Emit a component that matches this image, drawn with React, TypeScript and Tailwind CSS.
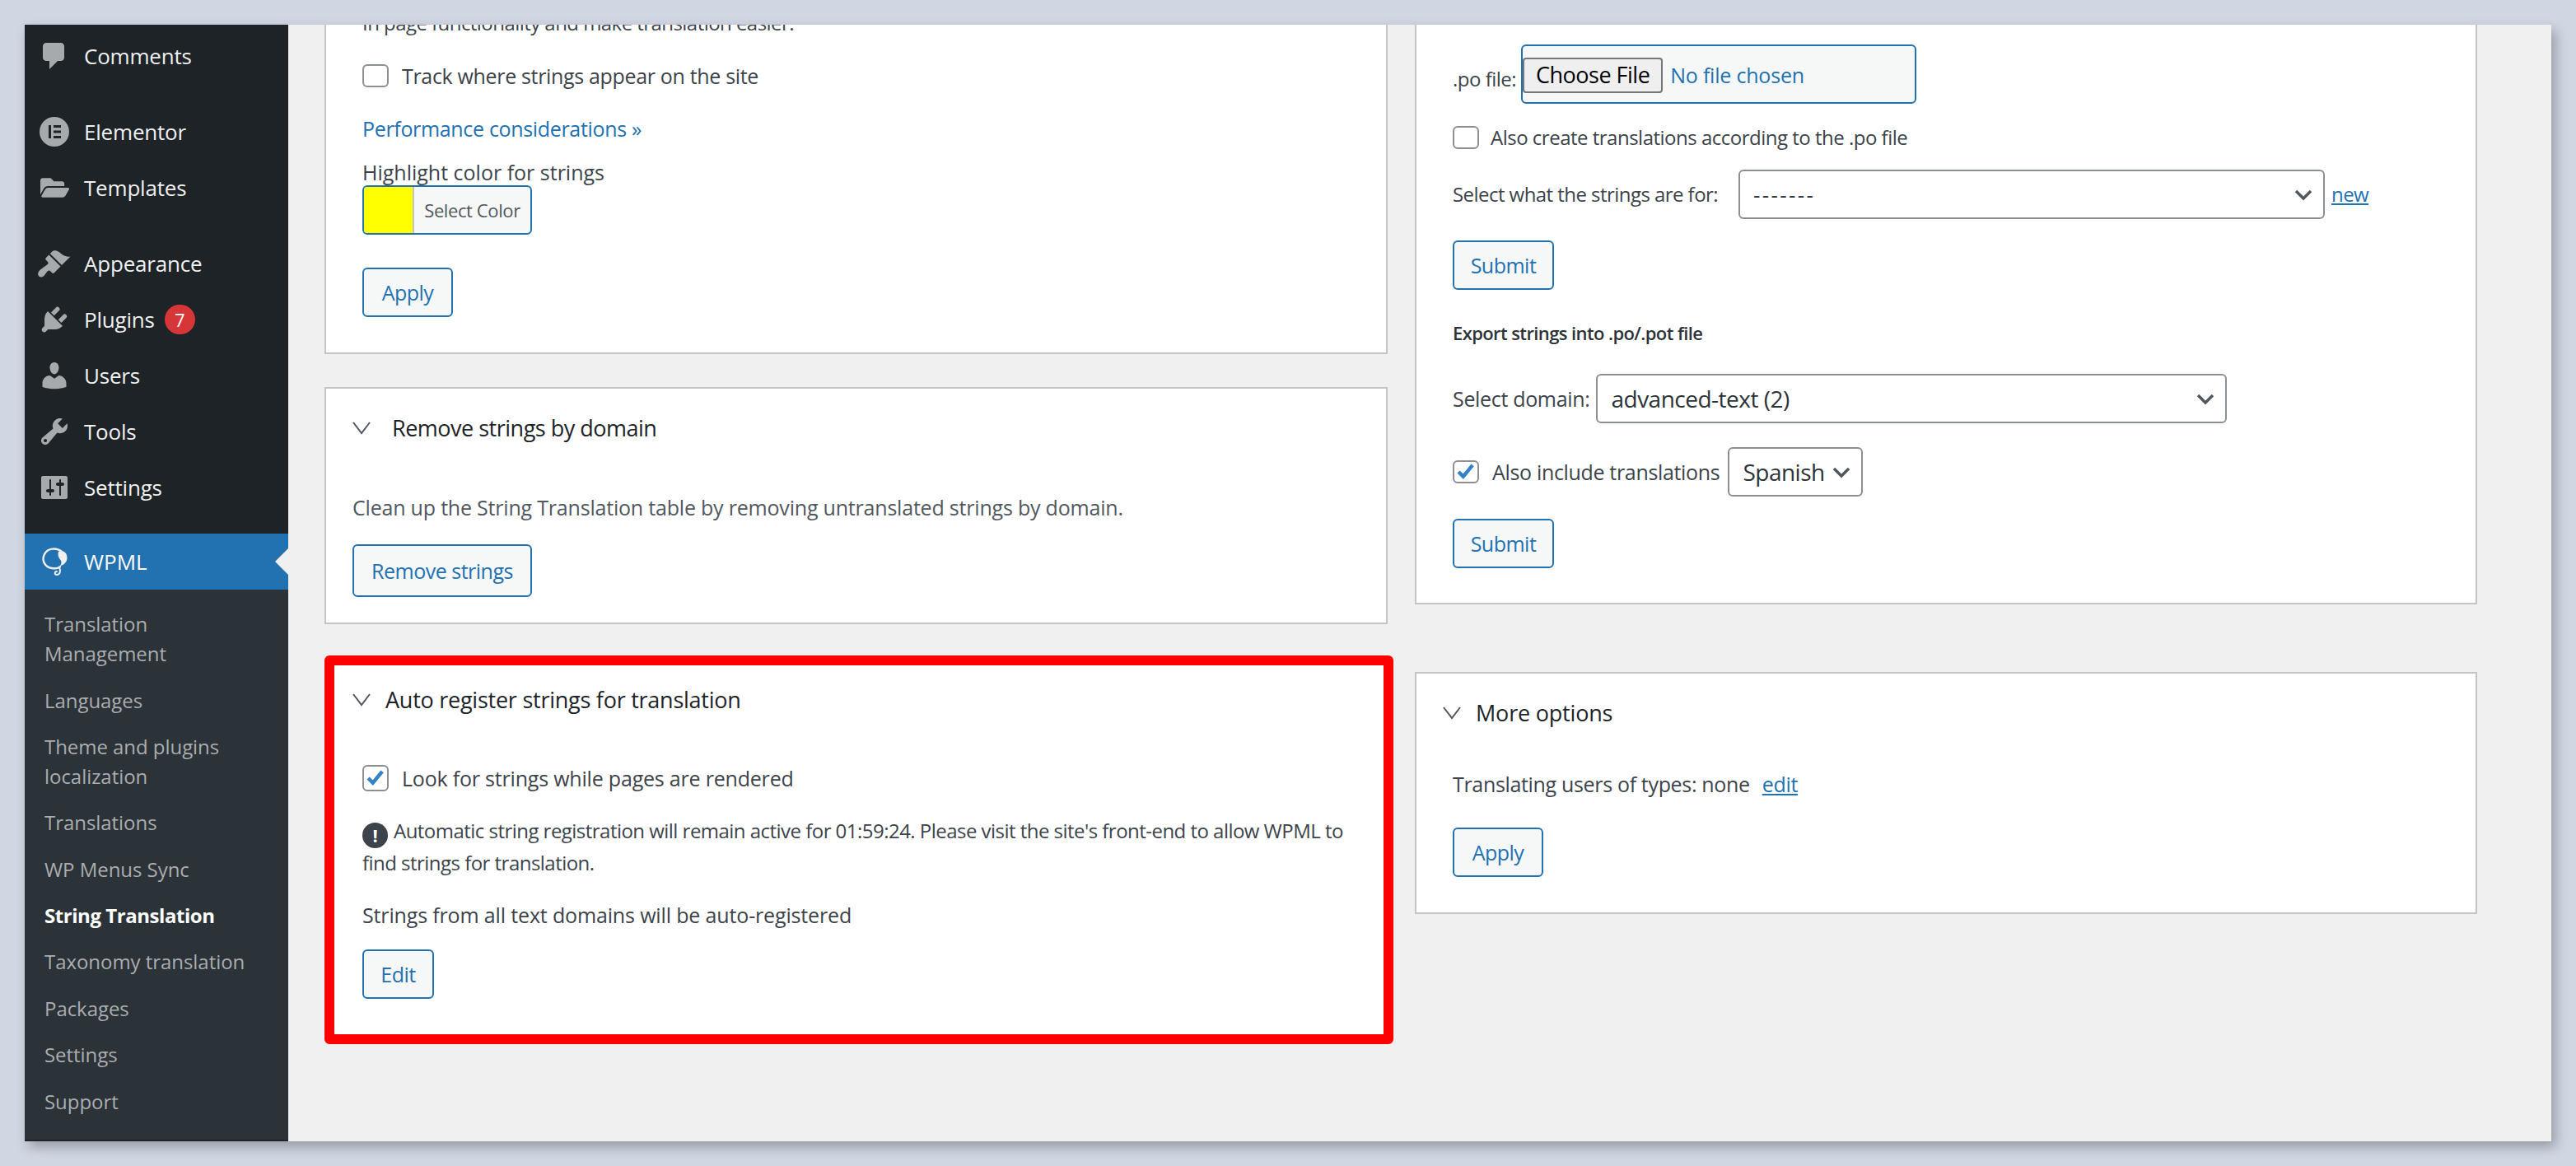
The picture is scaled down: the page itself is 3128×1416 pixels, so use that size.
import { FaFolderOpen } from "react-icons/fa";

const font = "font-['Open_Sans',sans-serif]";

function Dash({ d, className }: { d: string; className?: string }) {
  return (
    <svg viewBox="0 0 20 20" className={"w-10 h-10 fill-[#a7aaad] " + (className ?? "")}>
      <path d={d} />
    </svg>
  );
}

const icons = {
  comments:
    "M5 2h9q.82 0 1.41.59T16 4v7q0 .82-.59 1.41T14 13h-2l-5 5v-5H5q-.82 0-1.41-.59T3 11V4q0-.82.59-1.41T5 2z",
  appearance:
    "M14.48 11.06L7.41 3.99l1.5-1.5c.5-.56 2.3-.47 3.51.32 1.21.8 1.43 1.28 2.91 2.1 1.18.64 2.45 1.26 4.45.85zm-.71.71L6.7 4.7 4.93 6.47c-.39.39-.39 1.02 0 1.41l1.06 1.06c.39.39.39 1.03 0 1.42-.6.6-1.43 1.11-2.21 1.69-.35.26-.7.53-1.01.84C1.43 13.71.05 14.82.05 16.3c0 1.5 1.1 2.05 2.2 1.95.9-.1 1.5-.8 2.1-1.6.55-.75 1.1-1.5 1.7-2.1.39-.39 1.03-.39 1.42 0l1.06 1.06c.39.39 1.02.39 1.41 0z",
  plugins:
    "M13.11 4.36L9.87 7.6 8 5.73l3.24-3.24c.35-.34 1.05-.2 1.56.32.52.51.66 1.21.31 1.55zm-8 1.77l.91-1.12 9.01 9.01-1.19.84c-.71.71-2.63 1.16-3.82 1.16H6.14L4.9 17.26c-.59.59-1.54.59-2.12 0-.59-.58-.59-1.53 0-2.12l1.24-1.24v-3.88c0-1.13.4-3.19 1.09-3.89zm7.26 3.97l3.24-3.24c.34-.35 1.04-.21 1.55.31.52.51.66 1.21.31 1.55l-3.24 3.25z",
  users:
    "M10 9.25c-2.27 0-2.73-3.44-2.73-3.44C7 4.02 7.82 2 9.97 2c2.16 0 2.98 2.02 2.71 3.81 0 0-.41 3.44-2.68 3.44zm0 2.57L12.72 10c2.39 0 4.52 2.33 4.52 4.53v2.49s-3.65 1.13-7.24 1.13c-3.65 0-7.24-1.13-7.24-1.13v-2.49c0-2.25 1.94-4.48 4.47-4.48z",
  tools:
    "M16.68 9.77c-1.34 1.34-3.3 1.67-4.95.99l-5.41 6.52c-.99.99-2.59.99-3.58 0s-.99-2.59 0-3.57l6.52-5.42c-.68-1.65-.35-3.61.99-4.95 1.28-1.28 3.12-1.62 4.72-1.06l-2.89 2.89 2.82 2.82 2.86-2.87c.53 1.58.18 3.39-1.08 4.67zM3.81 16.21c.4.39 1.04.39 1.43 0 .4-.4.4-1.04 0-1.43-.39-.4-1.03-.4-1.43 0-.39.39-.39 1.03 0 1.43z",
  settings:
    "M18 16V4c0-.55-.45-1-1-1H3c-.55 0-1 .45-1 1v12c0 .55.45 1 1 1h14c.55 0 1-.45 1-1zM8 11h1c.55 0 1 .45 1 1s-.45 1-1 1H8v1.5c0 .28-.22.5-.5.5s-.5-.22-.5-.5V13H6c-.55 0-1-.45-1-1s.45-1 1-1h1V5.5c0-.28.22-.5.5-.5s.5.22.5.5V11zm5-2h-1c-.55 0-1-.45-1-1s.45-1 1-1h1V5.5c0-.28.22-.5.5-.5s.5.22.5.5V7h1c.55 0 1 .45 1 1s-.45 1-1 1h-1v5.5c0 .28-.22.5-.5.5s-.5-.22-.5-.5V9z",
};

function MenuItem({ icon, label, children }: { icon: React.ReactNode; label: string; children?: React.ReactNode }) {
  return (
    <div className="flex items-center h-[68px] pl-[16px]">
      <div className="w-10 h-10 flex items-center justify-center mr-[16px]">{icon}</div>
      <span className="text-[26px] tracking-[-0.2px] text-[#f0f0f1]">{label}</span>
      {children}
    </div>
  );
}

function SubItem({ children, bold }: { children: React.ReactNode; bold?: boolean }) {
  return (
    <div
      className={
        "px-[24px] py-[10.2px] text-[24px] leading-[36px] " +
        (bold ? "font-bold tracking-[-0.45px] text-white" : "tracking-[-0.05px] text-[#c3c4c7]/85")
      }
    >
      {children}
    </div>
  );
}

function Sidebar() {
  return (
    <div className="w-[320px] shrink-0 flex flex-col bg-[#1d2327]">
      <div className="pt-[4px]">
        <MenuItem icon={<Dash d={icons.comments} />} label="Comments" />
      </div>
      <div className="mt-[24px]">
        <MenuItem
          icon={
            <svg viewBox="0 0 36 36" className="w-9 h-9">
              <circle cx="18" cy="18" r="18" fill="#a7aaad" />
              <rect x="11" y="10" width="3" height="16" fill="#1d2327" />
              <rect x="17" y="10" width="9" height="3" fill="#1d2327" />
              <rect x="17" y="16.5" width="9" height="3" fill="#1d2327" />
              <rect x="17" y="23" width="9" height="3" fill="#1d2327" />
            </svg>
          }
          label="Elementor"
        />
        <MenuItem icon={<FaFolderOpen className="w-[35px] h-[32px] text-[#a7aaad]" />} label="Templates" />
      </div>
      <div className="mt-[24px]">
        <MenuItem icon={<Dash d={icons.appearance} />} label="Appearance" />
        <MenuItem icon={<Dash d={icons.plugins} />} label="Plugins">
          <span className="ml-[12px] w-[37px] h-[36px] rounded-full bg-[#d63638] text-white text-[22px] flex items-center justify-center">
            7
          </span>
        </MenuItem>
        <MenuItem icon={<Dash d={icons.users} />} label="Users" />
        <MenuItem icon={<Dash d={icons.tools} />} label="Tools" />
        <MenuItem icon={<Dash d={icons.settings} />} label="Settings" />
      </div>
      <div className="mt-[22px] relative flex items-center h-[68px] pl-[16px] bg-[#2271b1]">
        <div className="w-10 h-10 flex items-center justify-center mr-[16px]">
          <svg viewBox="0 0 40 40" className="w-10 h-10" fill="none" stroke="#f0f0f1" strokeLinecap="round">
            <path d="M29 8C23 3 12 3 8 11c-4 8 1 16 9 17 4 .6 8 0 10-2" strokeWidth="2.4" />
            <path
              d="M25 8c5-3 11 1 10.5 8-.4 5-4 8-8.500 9.500 2-3.500 2-6 0-8-2.500-2.500-3-7-2-9.500z"
              fill="#f0f0f1"
              stroke="none"
            />
            <path d="M26 27c2 4 1 9-3 9-3 0-3-4 0-4" strokeWidth="2" />
          </svg>
        </div>
        <span className="text-[26px] tracking-[0px] text-white">WPML</span>
        <div className="absolute right-0 top-[18px] w-0 h-0 border-y-[16px] border-y-transparent border-r-[16px] border-r-[#f0f0f1]" />
      </div>
      <div className="flex-1 bg-[#2c3338] pt-[14px] mb-[2px]">
        <SubItem>
          Translation
          <br />
          Management
        </SubItem>
        <SubItem>Languages</SubItem>
        <SubItem>
          Theme and plugins
          <br />
          localization
        </SubItem>
        <SubItem>Translations</SubItem>
        <SubItem>WP Menus Sync</SubItem>
        <SubItem bold>String Translation</SubItem>
        <SubItem>Taxonomy translation</SubItem>
        <SubItem>Packages</SubItem>
        <SubItem>Settings</SubItem>
        <SubItem>Support</SubItem>
      </div>
    </div>
  );
}

function Button({ children, className }: { children: React.ReactNode; className?: string }) {
  return (
    <button
      className={
        "h-[60px] flex items-center justify-center border-2 border-[#2271b1] rounded-[6px] bg-[#f6f7f7] text-[#2271b1] text-[25px] tracking-[-0.5px] " +
        (className ?? "")
      }
    >
      {children}
    </button>
  );
}

function Check({ checked, tall }: { checked?: boolean; tall?: boolean }) {
  return (
    <span
      className={
        "relative w-[32px] shrink-0 flex items-center justify-center border-2 border-[#8c8f94] rounded-[6px] bg-white " +
        (tall ? "h-[32px]" : "h-[28px]")
      }
    >
      {checked && (
        <svg viewBox="0 0 32 32" className="w-[28px] h-[26px]" fill="none" stroke="#3582c4" strokeWidth="5.5">
          <path d="M5 16l7 7L26 6" />
        </svg>
      )}
    </span>
  );
}

function Chevron({ className }: { className?: string }) {
  return (
    <svg viewBox="0 0 24 24" className={"w-[24px] h-[24px] " + (className ?? "")} fill="none" stroke="#50575e" strokeWidth="3.4">
      <path d="M3 8l9 9 9-9" />
    </svg>
  );
}

function PanelTitle({ children, gap, tracking }: { children: React.ReactNode; gap: string; tracking: string }) {
  return (
    <div className={"flex items-center " + gap}>
      <svg viewBox="0 0 22 16" className="w-[22px] h-[16px] shrink-0" fill="none" stroke="#50575e" strokeWidth="2">
        <path d="M1 1l10 13L21 1" />
      </svg>
      <span className={"text-[27px] text-[#1d2327] " + tracking}>{children}</span>
    </div>
  );
}

function Select({ className, textClass, children }: { className?: string; textClass?: string; children: React.ReactNode }) {
  return (
    <div
      className={
        "h-[60px] flex items-center justify-between border-2 border-[#8c8f94] rounded-[6px] bg-white text-[#2c3338] pl-[16px] pr-[12px] " +
        (className ?? "")
      }
    >
      <span className={textClass ?? "text-[28px] tracking-[-0.5px]"}>{children}</span>
      <Chevron />
    </div>
  );
}

export default function App() {
  return (
    <div className={"h-[1416px] bg-[#d0d6e2] pt-[30px] px-[30px] " + font}>
      <div className="h-[1356px] flex overflow-hidden bg-[#f0f0f1] shadow-[5px_7px_14px_rgba(0,0,0,0.28)]">
        <Sidebar />
        <div className="flex-1 flex items-start gap-[33px] pl-[44px] text-[#3c434a] text-[25px] tracking-[-0.33px] leading-[36px]">
          {/* left column, scrolled so the first panel is cut at the top */}
          <div className="w-[1291px] flex flex-col -mt-[10px]">
            <div className="h-[410px] bg-white border-2 border-[#c3c4c7] border-t-0 pl-[44px]">
              <div className="-mt-[10px] h-[36px] flex items-center text-[24px] tracking-[-0.55px]">
                In page functionality and make translation easier.
              </div>
              <div className="mt-[28px] flex items-center gap-[16px]">
                <Check />
                <span>Track where strings appear on the site</span>
              </div>
              <div className="mt-[28px] text-[#2271b1]">Performance considerations »</div>
              <div className="mt-[17px] tracking-[0px]">Highlight color for strings</div>
              <div className="-mt-[2px] w-[206px] h-[60px] flex border-2 border-[#2271b1] rounded-[6px] bg-[#f6f7f7] overflow-hidden">
                <div className="w-[61px] bg-[#ffff00] border-r-2 border-[#c3c4c7]" />
                <div className="flex-1 flex items-center justify-center text-[22px] tracking-[-0.4px] text-[#50575e]">
                  Select Color
                </div>
              </div>
              <Button className="mt-[40px] w-[110px]">Apply</Button>
            </div>

            <div className="mt-[40px] h-[288px] bg-white border-2 border-[#c3c4c7] pl-[32px]">
              <div className="mt-[30px]">
                <PanelTitle gap="gap-[26px]" tracking="tracking-[-0.5px]">
                  Remove strings by domain
                </PanelTitle>
              </div>
              <div className="mt-[60px] text-[#50575e] tracking-[-0.2px]">
                Clean up the String Translation table by removing untranslated strings by domain.
              </div>
              <Button className="mt-[27px] w-[218px] h-[64px]">Remove strings</Button>
            </div>

            {/* red highlight around the panel */}
            <div className="mt-[38px] w-[1298px] h-[472px] bg-white border-[12px] border-[#ff0000] rounded-[6px] pl-[22px]">
              <div className="mt-[24px]">
                <PanelTitle gap="gap-[18px]" tracking="tracking-[-0.25px]">
                  Auto register strings for translation
                </PanelTitle>
              </div>
              <div className="pl-[12px]">
                <div className="mt-[59px] flex items-center gap-[16px] tracking-[-0.2px]">
                  <Check checked tall />
                  <span>Look for strings while pages are rendered</span>
                </div>
                <div className="mt-[28px] text-[24px] tracking-[-0.53px]">
                  <span className="inline-flex align-[-5px] items-center justify-center w-[31px] h-[31px] rounded-full bg-[#3c434a] text-white text-[22px] font-bold mr-[7px]">
                    !
                  </span>
                  Automatic string registration will remain active for 01:59:24. Please visit the site's front-end to allow WPML to
                  <br />
                  find strings for translation.
                </div>
                <div className="mt-[27px] tracking-[-0.15px]">Strings from all text domains will be auto-registered</div>
                <Button className="mt-[24px] w-[87px]">Edit</Button>
              </div>
            </div>
          </div>

          <div className="w-[1290px] flex flex-col -mt-[10px]">
            <div className="h-[714px] bg-white border-2 border-[#c3c4c7] border-t-0 pl-[44px]">
              <div className="mt-[34px] flex items-center h-[72px] gap-[6px] text-[24px] tracking-[-0.5px]">
                <span className="mt-[12px]">.po file:</span>
                <div className="w-[480px] h-[72px] border-2 border-[#2271b1] rounded-[6px] bg-[#f6f7f7] flex items-center">
                  <div className="w-[170px] h-[43px] mt-[2px] border-2 border-[#767676] rounded-[4px] bg-[#efefef] text-black text-[27px] flex items-center justify-center">
                    Choose File
                  </div>
                  <span className="ml-[9px] mt-[2px] text-[#2271b1] text-[25px] tracking-[-0.2px]">No file chosen</span>
                </div>
              </div>
              <div className="mt-[23px] flex items-center gap-[14px] text-[24px] tracking-[-0.5px]">
                <Check />
                <span>Also create translations according to the .po file</span>
              </div>
              <div className="mt-[21px] flex items-center text-[24px] tracking-[-0.55px]">
                <span className="w-[347px]">Select what the strings are for:</span>
                <Select className="w-[712px]" textClass="text-[26px] tracking-[2.4px]">
                  -------
                </Select>
                <span className="ml-[8px] text-[24px] text-[#2271b1] underline">new</span>
              </div>
              <Button className="mt-[26px] w-[123px]">Submit</Button>
              <div className="mt-[34px] text-[22px] font-semibold tracking-[-0.6px] text-[#2c3338]">
                Export strings into .po/.pot file</div>
              <div className="mt-[32px] flex items-center gap-[8px]">
                <span>Select domain:</span>
                <Select className="w-[766px]">advanced-text (2)</Select>
              </div>
              <div className="mt-[29px] flex items-center">
                <Check checked />
                <span className="ml-[16px] mr-[10px]">Also include translations</span>
                <Select className="w-[164px]">Spanish</Select>
              </div>
              <Button className="mt-[27px] w-[123px]">Submit</Button>
            </div>

            <div className="mt-[82px] h-[294px] bg-white border-2 border-[#c3c4c7] pl-[32px]">
              <div className="mt-[30px]">
                <PanelTitle gap="gap-[18px]" tracking="tracking-[-0.2px]">
                  More options
                </PanelTitle>
              </div>
              <div className="pl-[12px] mt-[50px] flex gap-[15px]">
                <span>Translating users of types: none</span>
                <span className="text-[#2271b1] underline">edit</span>
              </div>
              <Button className="ml-[12px] mt-[35px] w-[110px]">Apply</Button>
            </div>
          </div>
        </div>
      </div>
    </div>
  );
}
